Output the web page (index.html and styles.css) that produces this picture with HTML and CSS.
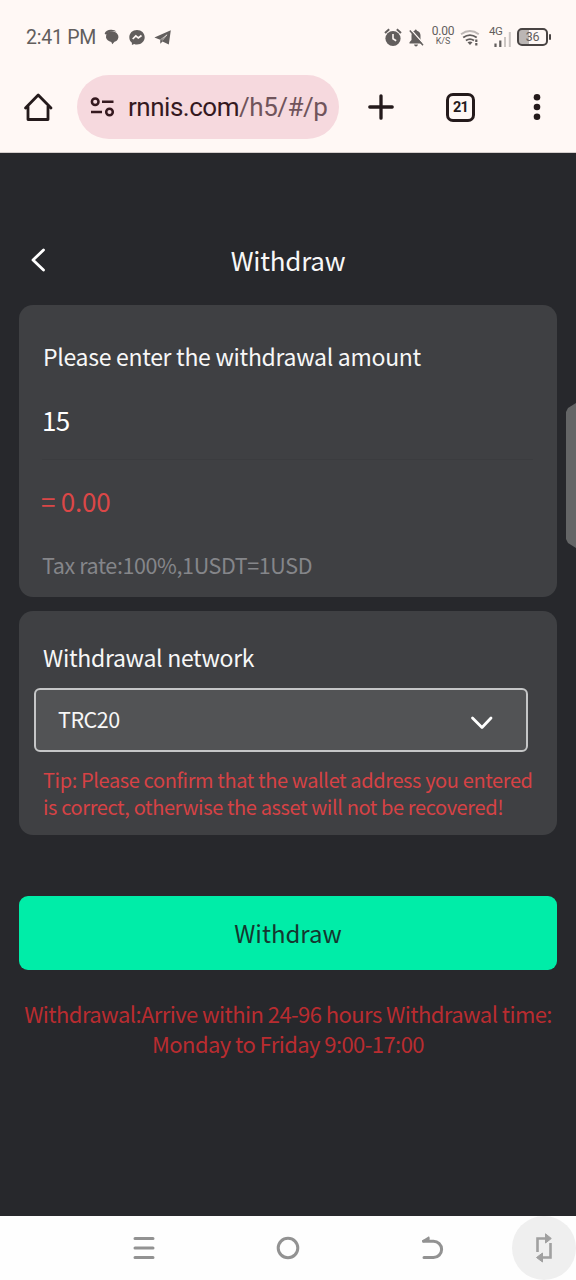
FILE: index.html
```html
<!DOCTYPE html>
<html lang="en">
<head>
<meta charset="utf-8">
<title>Withdraw</title>
<link rel="stylesheet" href="styles.css">
</head>
<body>
<div class="phone">
  <header class="browser">
    <div class="status">
      <span class="clock">2:41 PM</span>
      <svg class="notices" width="70" height="20" viewBox="0 0 70 20" fill="#625e5d">
        <path d="M3 5Q6.500 2.200 11 4Q14.700 6 14.400 9.500Q13.500 13.300 10.500 13.800L8.300 16.300L7.300 13.900Q2.800 13 2 9.500Q1.800 7 3 5z"/>
        <path d="M.6 5.400Q2.500 1.600 7 1.800Q10.500 1.600 12.500 3.600Q6 2.400 2 6.800z"/>
        <path d="M33 2C28.500 2 25.300 5.200 25.300 9.200C25.300 11.500 26.300 13.400 27.900 14.700V17L30.200 15.900Q31.500 16.400 33 16.400C37.500 16.400 40.700 13.200 40.700 9.200S37.500 2 33 2z"/>
        <path d="M28.700 11L31.800 7.900L34.300 10L37.500 7.500" fill="none" stroke="#fff8f5" stroke-width="1.700"/>
        <path d="M50.400 9.500L66.800 2.200L64.800 16.600L58.500 13.400L56.300 15.700L56.200 11.700z"/>
        <path d="M56.400 11.800L63 6.800L58.200 12.500" fill="none" stroke="#fff8f5" stroke-width=".6"/>
      </svg>
      <div class="indicators">
        <svg width="42" height="22" viewBox="0 0 42 22" fill="#625e5d">
          <circle cx="9" cy="11.500" r="7.600"/>
          <path d="M1 6L5.200 2.300M17 6L12.800 2.300" stroke="#625e5d" stroke-width="2"/>
          <path d="M9 7V11.800L12.200 13.700" fill="none" stroke="#fff8f5" stroke-width="1.600"/>
          <path d="M25.500 16.500V15.300L27.500 13V8.500Q27.500 4.500 30.500 3.700Q31.700 1.500 33 3.700Q36.500 5 36.500 8.500V13L38.500 15.300V16.500z"/>
          <path d="M30 17.500H34Q33.500 19.500 32 19.500Q30.500 19.500 30 17.500z"/>
          <path d="M27 2.700L40 17.300" stroke="#fff8f5" stroke-width="1.300"/>
          <path d="M25.800 3.500L39 18.200" stroke="#625e5d" stroke-width="1.500"/>
        </svg>
        <span class="speed"><span class="rate">0.00</span><span class="unit">K/S</span></span>
        <svg class="wifi" width="20" height="18" viewBox="0 0 20 18" fill="none" stroke="#625e5d" stroke-width="1.900">
          <path d="M1 5.200Q10-1.300 18.800 5.200" stroke="#bdb7b5"/>
          <path d="M3.200 8.600Q10 3.600 16.700 8.600M5.900 11.600Q10 8.600 14 11.600"/>
          <path d="M7.500 13.200Q10 11.800 12.500 13.200L10 16z" fill="#625e5d" stroke="none"/>
          <path d="M16.300 10.500V16.500" stroke-width="2.200" stroke-dasharray="2.500 1"/>
        </svg>
        <span class="cell"><span class="gen">4G</span>
          <svg class="bars" width="23" height="20" viewBox="0 0 23 20">
            <path d="M6.500 14.500V18M11.300 11.500V18" stroke="#625e5d" stroke-width="2.200"/>
            <path d="M16 8V18M20.800 3V18" stroke="#cbc5c2" stroke-width="2"/>
          </svg>
        </span>
        <span class="battery"><span class="charge">36</span></span>
      </div>
    </div>
    <div class="toolbar">
      <svg class="home" width="30" height="30" viewBox="0 0 30 30" fill="none" stroke="#241a1b" stroke-width="2.800" stroke-linejoin="round" stroke-linecap="round">
        <path d="M5 14.500V27.500H25V14.500M2.500 16L15.200 3L28 16"/>
      </svg>
      <div class="address">
        <svg width="26" height="20" viewBox="0 0 26 20" fill="none" stroke="#35191f" stroke-width="2.500">
          <circle cx="5.200" cy="4.800" r="3.300"/><circle cx="19.500" cy="15" r="3.300"/>
          <path d="M12 4.800H23.500M1 15H12"/>
        </svg>
        <span class="url">rnnis.com<span class="path">/h5/#/p</span></span>
      </div>
      <svg class="plus" width="26" height="26" viewBox="0 0 26 26" stroke="#241a1b" stroke-width="3.300" stroke-linecap="round"><path d="M1.800 13H24.200M13 1.800V24.200"/></svg>
      <span class="tabs">21</span>
      <svg class="more" width="8" height="28" viewBox="0 0 8 28" fill="#241a1b"><circle cx="4" cy="4.300" r="3.300"/><circle cx="4" cy="14" r="3.300"/><circle cx="4" cy="23.700" r="3.300"/></svg>
    </div>
  </header>

  <main class="app">
    <div class="titlebar">
      <svg class="back" width="16" height="26" viewBox="0 0 16 26" fill="none" stroke="#fff" stroke-width="2.800" stroke-linecap="round" stroke-linejoin="round"><path d="M13.500 3L3 13L13.500 23"/></svg>
      <h1 class="title">Withdraw</h1>
    </div>
    <section class="card amount-card">
      <div class="label">Please enter the withdrawal amount</div>
      <div class="amount">15</div>
      <div class="result">= 0.00</div>
      <div class="rate-note">Tax rate:100%,1USDT=1USD</div>
    </section>
    <section class="card network-card">
      <div class="label network-label">Withdrawal network</div>
      <div class="select">
        <span class="network">TRC20</span>
        <svg width="24" height="16" viewBox="0 0 24 16" fill="none" stroke="#fff" stroke-width="2.800" stroke-linecap="round" stroke-linejoin="round"><path d="M3.500 3L13 12.500L22 3"/></svg>
      </div>
      <div class="tip"><div>Tip: Please confirm that the wallet address you entered</div><div>is correct, otherwise the asset will not be recovered!</div></div>
    </section>
    <button class="submit">Withdraw</button>
    <div class="schedule"><div>Withdrawal:Arrive within 24-96 hours Withdrawal time:</div><div>Monday to Friday 9:00-17:00</div></div>
    <div class="edge-handle"></div>
  </main>

  <nav class="navbar">
    <svg width="24" height="24" viewBox="0 0 24 24" stroke="#929292" stroke-width="3" stroke-linecap="round"><path d="M3 2.500H21M3 12H21M3 21.500H21"/></svg>
    <svg width="24" height="24" viewBox="0 0 24 24" fill="none" stroke="#929292" stroke-width="3"><circle cx="12" cy="12" r="9.800"/></svg>
    <svg width="24" height="24" viewBox="0 0 24 24" fill="none" stroke="#929292" stroke-width="3" stroke-linecap="round"><path d="M3.500 5.300H13.500A8.100 8.100 0 0 1 13.500 21.500H4"/><path d="M2 4.500L9 .2Q10.500 2 9.500 5L3 6.500z" fill="#929292" stroke="none"/></svg>
    <span class="rotate">
      <svg width="18" height="30" viewBox="0 0 18 30" fill="none" stroke="#a0a0a0" stroke-width="2.600"><path d="M2.500 19V5.500H12M15.500 10V24.500H6"/><path d="M10.500 .8L16.300 5.500L10.500 10zM7.500 20L1.500 24.500L7.500 29z" fill="#a0a0a0" stroke="#a0a0a0" stroke-width="1" stroke-linejoin="round"/></svg>
    </span>
  </nav>
</div>
</body>
</html>
```
FILE: styles.css
```css
* { box-sizing: border-box; }
body { margin: 0; font-family: "Noto Sans CJK SC", "Noto Sans", sans-serif; }
svg { display: block; flex: none; }
.phone { width: 576px; height: 1280px; display: flex; flex-direction: column; overflow: hidden; background: #27282c; }

.browser { height: 153px; flex: none; background: #fff8f5; border-bottom: 1px solid #d5cecc; font-family: Roboto, sans-serif; }
.status { height: 75px; padding: 0 28px 0 26px; display: flex; align-items: center; color: #625e5d; }
.clock { font-size: 19.500px; line-height: 24px; letter-spacing: -.25px; width: 78px; white-space: nowrap; }
.notices { margin-top: 1px; }
.indicators { margin-left: auto; height: 24px; display: flex; align-items: center; }
.speed { width: 24px; margin: -3px 5px 0 5px; display: flex; flex-direction: column; align-items: center; }
.rate { font-size: 12px; line-height: 11px; letter-spacing: -.2px; }
.unit { font-size: 9px; line-height: 9px; }
.wifi { margin-top: 1px; }
.cell { width: 23px; margin: 0 5px 0 9px; height: 24px; position: relative; }
.gen { position: absolute; left: 0; top: -1px; font-size: 11.500px; line-height: 12px; letter-spacing: -.5px; }
.bars { margin-top: 3px; }
.battery { position: relative; width: 31px; height: 18px; margin-top: -1px; border: 2px solid #494443; border-radius: 5px; background: linear-gradient(90deg, #bbb6b4 10px, #fff8f5 10px); display: flex; align-items: center; justify-content: center; }
.battery::after { content: ""; position: absolute; right: -5px; top: 4px; width: 2px; height: 6px; background: #494443; border-radius: 1px; }
.charge { font-size: 12.500px; line-height: 14px; letter-spacing: -.4px; }
.toolbar { height: 64px; padding-left: 23px; display: flex; align-items: center; }
.home { margin-right: 24px; }
.address { width: 262px; height: 64px; padding-left: 13px; display: flex; align-items: center; gap: 12px; border-radius: 32px; background: #f6d9de; flex: none; }
.url { font-size: 26px; line-height: 32px; letter-spacing: -.48px; color: #35191f; white-space: nowrap; }
.path { color: #70545b; }
.plus { margin-left: 29px; }
.tabs { width: 29px; height: 29px; margin-left: 52px; border: 3px solid #241a1b; border-radius: 7px; display: flex; align-items: center; justify-content: center; font-size: 14.500px; letter-spacing: -.7px; font-weight: 700; color: #241a1b; flex: none; }
.more { margin-left: 58px; }

.app { position: relative; height: 1063px; flex: none; padding: 82px 19px 0; display: flex; flex-direction: column; color: #f7f7f7; white-space: nowrap; }
.titlebar { height: 50px; display: grid; grid-template-columns: 40px 1fr 40px; align-items: center; }
.back { margin-left: 11px; }
.title { margin: -1px 0 0; font-size: 26px; line-height: 36px; letter-spacing: -.25px; font-weight: 400; text-align: center; }
.card { background: #3f4043; border-radius: 14px; flex: none; }
.amount-card { height: 292px; margin-top: 20px; padding: 34px 24px 0; }
.label { font-size: 23px; line-height: 34px; letter-spacing: -.3px; }
.amount { height: 87px; padding-top: 27px; margin-left: -1px; font-size: 26px; line-height: 40px; letter-spacing: -.6px; border-bottom: 1px solid #3b3c3f; color: #fff; }
.result { margin-top: 21px; margin-left: -2px; font-size: 26px; line-height: 40px; letter-spacing: -.2px; color: #db4747; }
.rate-note { margin-top: 28px; margin-left: -1px; font-size: 21.500px; line-height: 32px; letter-spacing: -.39px; color: #85868a; }
.network-card { height: 224px; margin-top: 14px; padding: 29px 15px 0; }
.network-label { padding-left: 9px; }
.select { width: 494px; height: 64px; margin-top: 14px; padding: 0 33px 0 22px; border: 2px solid #c5c6c7; border-radius: 6px; background: #525355; display: flex; align-items: center; justify-content: space-between; }
.select svg { margin-top: 6px; }
.network { margin-top: -2px; font-size: 21.500px; line-height: 32px; letter-spacing: -.5px; }
.tip { padding-left: 9px; margin-top: 14px; font-size: 20px; line-height: 27px; letter-spacing: -.385px; color: #d64245; }
.submit { height: 74px; flex: none; margin-top: 62px; padding: 0 0 1px; border: 0; border-radius: 9px; background: #00eda8; color: #15372f; font-family: inherit; font-size: 24px; line-height: 36px; }
.network-card + .submit { margin-top: 61px; }
.schedule { margin: 28px -10px 0; text-align: center; font-size: 22px; line-height: 30px; letter-spacing: -.57px; color: #b92c30; }
.edge-handle { position: absolute; right: 0; top: 250px; width: 10px; height: 145px; background: #646566; clip-path: polygon(100% 0, 20% 5px, 0 9px, 0 136px, 20% 140px, 100% 100%); }

.navbar { height: 64px; flex: none; padding-left: 132px; display: flex; align-items: center; gap: 120px; background: #fefefe; }
.rotate { width: 64px; height: 64px; margin-left: -52px; border-radius: 50%; background: #efefef; display: flex; align-items: center; justify-content: center; flex: none; }
```
